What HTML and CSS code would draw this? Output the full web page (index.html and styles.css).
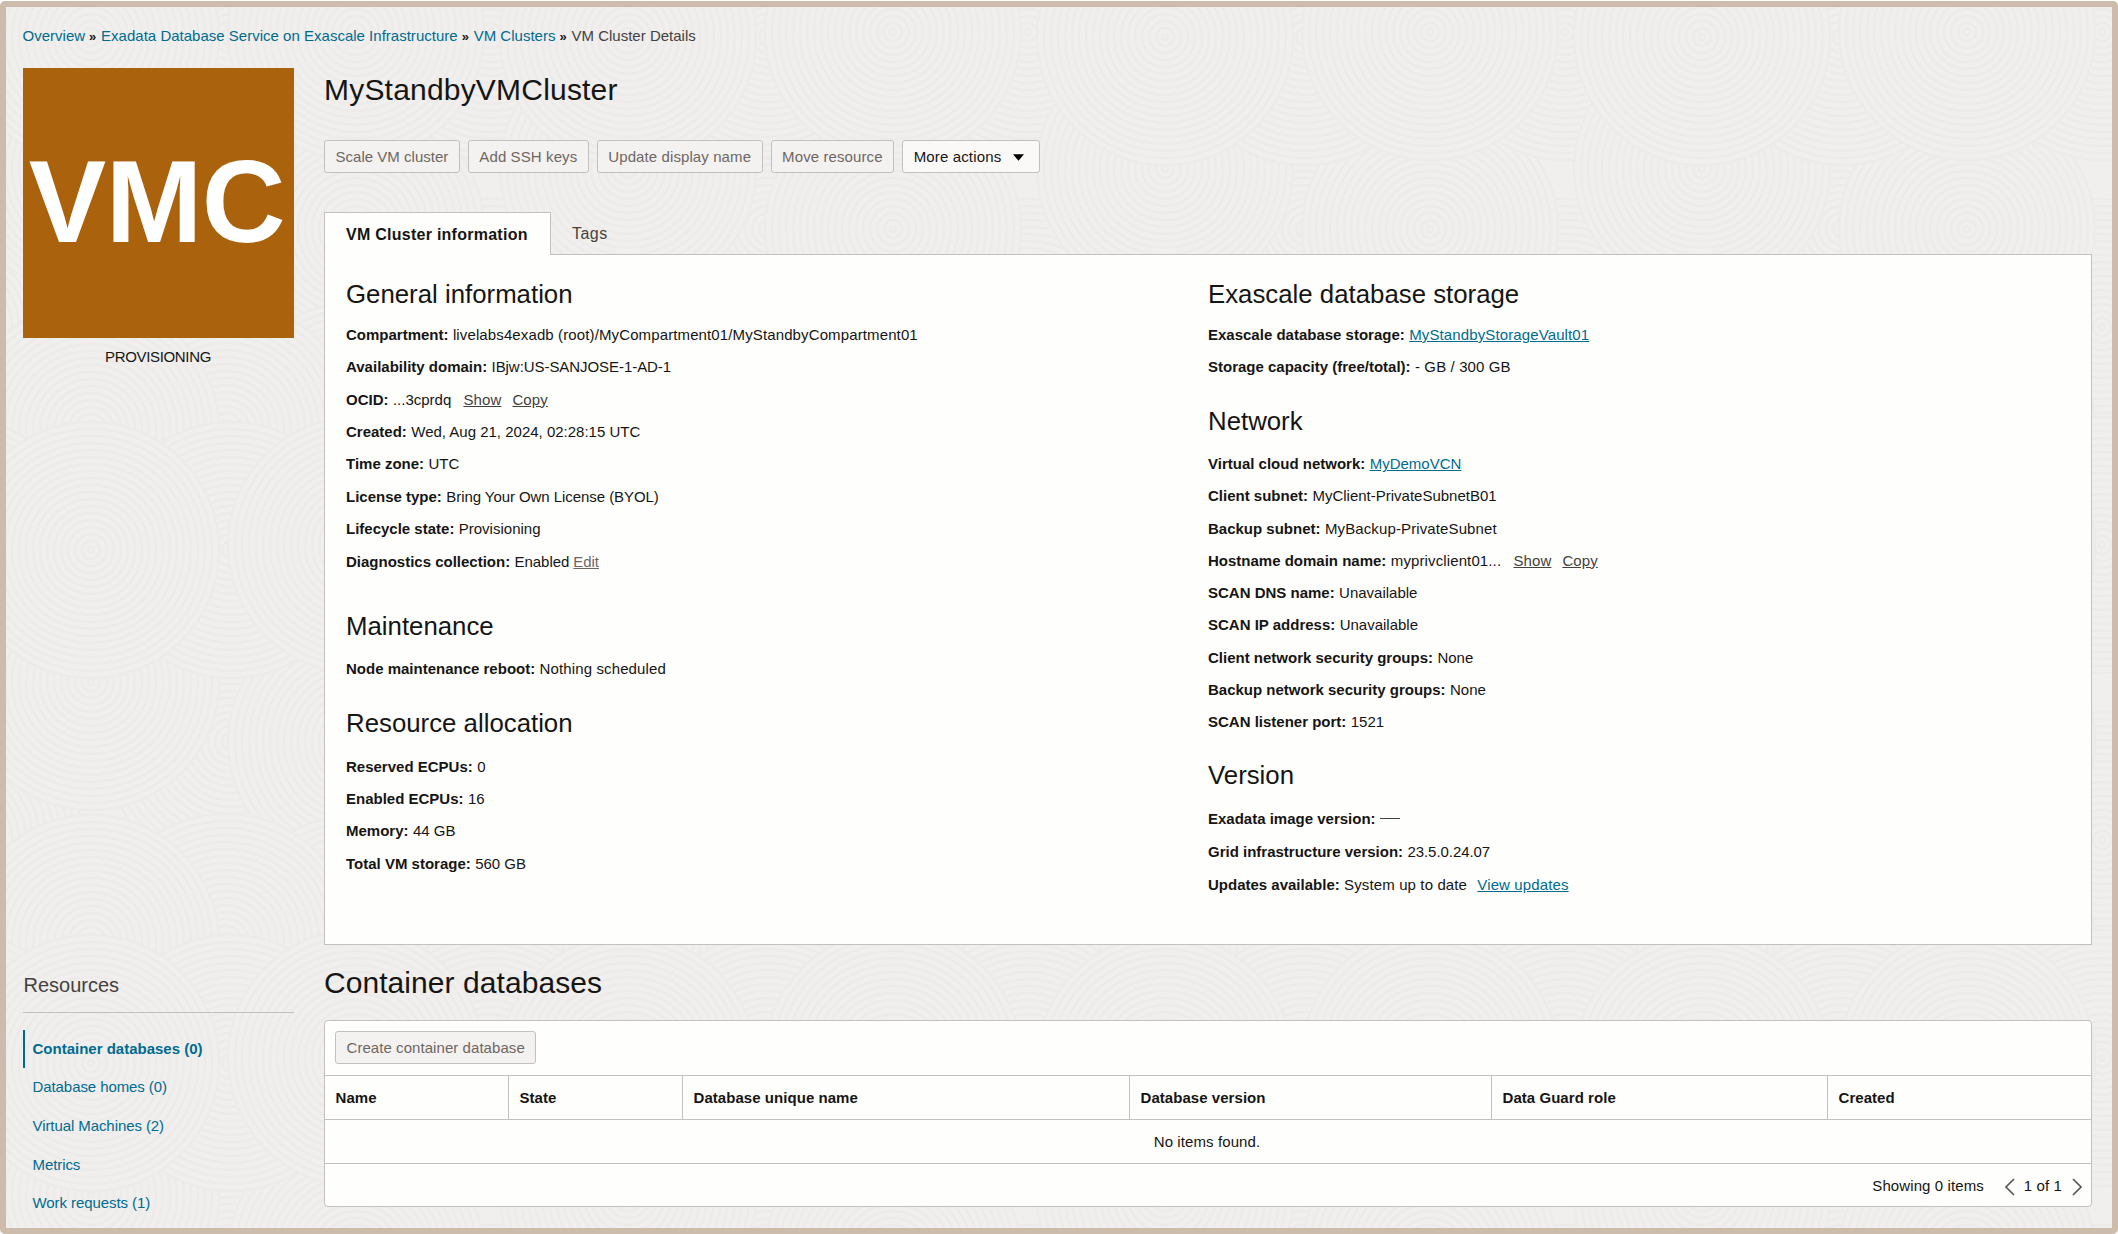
FILE: index.html
```html
<!DOCTYPE html>
<html lang="en">
<head>
<meta charset="utf-8">
<title>VM Cluster Details</title>
<link rel="stylesheet" href="styles.css">
</head>
<body>
<div class="app">
  <svg class="texture" aria-hidden="true">
    <defs>
      <g id="rings">
        <circle r="128"/><circle r="121"/><circle r="114"/><circle r="107"/><circle r="100"/><circle r="93"/><circle r="86"/><circle r="79"/><circle r="72"/><circle r="65"/><circle r="58"/><circle r="51"/><circle r="44"/><circle r="37"/><circle r="30"/><circle r="23"/><circle r="16"/><circle r="9"/><circle r="3"/>
      </g>
      <g id="tile">
        <use href="#rings" x="485" y="320"/>
        <use href="#rings" x="225" y="222"/>
        <use href="#rings" x="350" y="222"/>
        <use href="#rings" x="85" y="162"/>
        <use href="#rings" x="225" y="30"/>
        <use href="#rings" x="85" y="30"/>
        <use href="#rings" x="485" y="25"/>
        <use href="#rings" x="350" y="25"/>
        <use href="#rings" x="350" y="423"/>
        <use href="#rings" x="220" y="422"/>
        <use href="#rings" x="85" y="423"/>
      </g>
    </defs>
    <use href="#tile" x="-537" y="-513"/><use href="#tile" x="0" y="-513"/><use href="#tile" x="537" y="-513"/><use href="#tile" x="1074" y="-513"/><use href="#tile" x="1611" y="-513"/>
    <use href="#tile" x="-537" y="0"/><use href="#tile" x="0" y="0"/><use href="#tile" x="537" y="0"/><use href="#tile" x="1074" y="0"/><use href="#tile" x="1611" y="0"/>
    <use href="#tile" x="-537" y="513"/><use href="#tile" x="0" y="513"/><use href="#tile" x="537" y="513"/><use href="#tile" x="1074" y="513"/><use href="#tile" x="1611" y="513"/>
    <use href="#tile" x="-537" y="1026"/><use href="#tile" x="0" y="1026"/><use href="#tile" x="537" y="1026"/><use href="#tile" x="1074" y="1026"/><use href="#tile" x="1611" y="1026"/>
  </svg>

  <nav class="crumbs">
    <a href="#">Overview</a><span class="sep">»</span><a href="#">Exadata Database Service on Exascale Infrastructure</a><span class="sep">»</span><a href="#">VM Clusters</a><span class="sep">»</span><span>VM Cluster Details</span>
  </nav>

  <div class="columns top">
    <aside class="side">
      <div class="badge">VMC</div>
      <div class="status">PROVISIONING</div>
    </aside>
    <main class="main">
      <h1>MyStandbyVMCluster</h1>
      <div class="actions">
        <button class="btn off">Scale VM cluster</button>
        <button class="btn off">Add SSH keys</button>
        <button class="btn off">Update display name</button>
        <button class="btn off">Move resource</button>
        <button class="btn more">More actions <svg width="11" height="7" viewBox="0 0 10 6"><path d="M0 0h10L5 6z"/></svg></button>
      </div>
      <div class="tabs"><div class="tab active">VM Cluster information</div><div class="tab">Tags</div></div>
      <section class="card">
        <div class="col left">
          <h2>General information</h2>
          <dl>
            <div><dt>Compartment:</dt><dd class="wide">livelabs4exadb (root)/MyCompartment01/MyStandbyCompartment01</dd></div>
            <div><dt>Availability domain:</dt><dd class="tight">IBjw:US-SANJOSE-1-AD-1</dd></div>
            <div><dt>OCID:</dt><dd>...3cprdq <a class="util" href="#">Show</a><a class="util" href="#">Copy</a></dd></div>
            <div><dt>Created:</dt><dd>Wed, Aug 21, 2024, 02:28:15 UTC</dd></div>
            <div><dt>Time zone:</dt><dd>UTC</dd></div>
            <div><dt>License type:</dt><dd class="tight">Bring Your Own License (BYOL)</dd></div>
            <div><dt>Lifecycle state:</dt><dd>Provisioning</dd></div>
            <div><dt>Diagnostics collection:</dt><dd class="tight">Enabled <a class="edit" href="#">Edit</a></dd></div>
          </dl>
          <h2 class="maint">Maintenance</h2>
          <dl class="spaced"><div><dt>Node maintenance reboot:</dt><dd class="wide">Nothing scheduled</dd></div></dl>
          <h2 class="alloc">Resource allocation</h2>
          <dl class="spaced">
            <div><dt>Reserved ECPUs:</dt><dd>0</dd></div>
            <div><dt>Enabled ECPUs:</dt><dd>16</dd></div>
            <div><dt>Memory:</dt><dd>44 GB</dd></div>
            <div><dt>Total VM storage:</dt><dd>560 GB</dd></div>
          </dl>
        </div>
        <div class="col right">
          <h2>Exascale database storage</h2>
          <dl>
            <div><dt>Exascale database storage:</dt><dd><a class="link wide" href="#">MyStandbyStorageVault01</a></dd></div>
            <div><dt>Storage capacity (free/total):</dt><dd class="wide">- GB / 300 GB</dd></div>
          </dl>
          <h2 class="net">Network</h2>
          <dl class="spaced">
            <div><dt>Virtual cloud network:</dt><dd><a class="link" href="#">MyDemoVCN</a></dd></div>
            <div><dt>Client subnet:</dt><dd>MyClient-PrivateSubnetB01</dd></div>
            <div><dt>Backup subnet:</dt><dd class="wide">MyBackup-PrivateSubnet</dd></div>
            <div><dt>Hostname domain name:</dt><dd class="wide">myprivclient01... <a class="util" href="#">Show</a><a class="util" href="#">Copy</a></dd></div>
            <div><dt>SCAN DNS name:</dt><dd>Unavailable</dd></div>
            <div><dt>SCAN IP address:</dt><dd>Unavailable</dd></div>
            <div><dt>Client network security groups:</dt><dd>None</dd></div>
            <div><dt>Backup network security groups:</dt><dd>None</dd></div>
            <div><dt>SCAN listener port:</dt><dd>1521</dd></div>
          </dl>
          <h2 class="ver">Version</h2>
          <dl class="spaced version">
            <div><dt>Exadata image version:</dt><dd><span class="dash"></span></dd></div>
            <div><dt>Grid infrastructure version:</dt><dd class="tight">23.5.0.24.07</dd></div>
            <div><dt>Updates available:</dt><dd class="wide">System up to date <a class="link after" href="#">View updates</a></dd></div>
          </dl>
        </div>
      </section>
    </main>
  </div>

  <div class="columns bottom">
    <aside class="side">
      <h3>Resources</h3>
      <ul class="menu">
        <li class="current"><a href="#">Container databases (0)</a></li>
        <li><a href="#">Database homes (0)</a></li>
        <li><a href="#">Virtual Machines (2)</a></li>
        <li><a href="#">Metrics</a></li>
        <li><a href="#">Work requests (1)</a></li>
      </ul>
    </aside>
    <section class="main">
      <h1 class="list-title">Container databases</h1>
      <div class="panel">
        <div class="toolbar"><button class="btn off">Create container database</button></div>
        <div class="thead"><span>Name</span><span>State</span><span>Database unique name</span><span>Database version</span><span>Data Guard role</span><span>Created</span></div>
        <div class="empty">No items found.</div>
        <div class="pager">
          <span>Showing 0 items</span>
          <svg class="prev" width="11" height="18" viewBox="0 0 11 18"><path d="M10 1L2 9l8 8"/></svg>
          <span>1 of 1</span>
          <svg class="next" width="11" height="18" viewBox="0 0 11 18"><path d="M1 1l8 8-8 8"/></svg>
        </div>
      </div>
    </section>
  </div>
</div>
</body>
</html>
```
FILE: styles.css
```css
* { box-sizing: border-box; }
body {
  margin: 0;
  padding-top: 1px;
  background: #fff;
  color: #161513;
  font: 15px/20px "Liberation Sans", Arial, sans-serif;
}
h1, h2, h3, dl, dd, ul { margin: 0; padding: 0; font-weight: 400; }
a { color: #006b8f; text-decoration: none; }

.app {
  position: relative;
  height: 1233px;
  border: 6px solid #cdbbab;
  border-radius: 5px;
  padding: 0 20px 0 16.5px;
  background: #f0efed;
  overflow: hidden;
}
.texture { position: absolute; left: 0; top: 0; width: 100%; height: 100%; }
.texture circle { fill: #f0efed; stroke: #ecebe9; stroke-width: 2.4; }
.crumbs, .columns { position: relative; }

.crumbs { height: 61px; padding-top: 19px; white-space: nowrap; color: #45413e; letter-spacing: .01px; }
.sep { display: inline-block; width: 16px; padding-left: 4px; color: #161513; font-size: 13px; font-weight: 700; }

.columns { display: grid; grid-template-columns: 271px 1768px; gap: 30.5px; }
.top { height: 876px; }

.badge {
  height: 270px;
  background: #ab620d;
  color: #fff;
  font: 700 116px/269px "Liberation Sans", Arial, sans-serif;
  text-align: center;
  letter-spacing: -.5px;
  text-indent: -2px;
}
.status { margin-top: 9px; text-align: center; letter-spacing: -.33px; }

h1 { font-size: 30px; line-height: 36px; letter-spacing: .2px; }
.top h1 { padding-top: 4px; }
.actions { display: flex; gap: 8px; margin-top: 32px; }
.btn {
  height: 33px;
  padding: 0 10.5px;
  border: 1px solid #c4c0bb;
  border-radius: 3px;
  background: #fbf9f8;
  color: #161513;
  font: 15px "Liberation Sans", Arial, sans-serif;
  letter-spacing: .1px;
}
.actions .btn:first-child { letter-spacing: .02px; }
.more { letter-spacing: .15px; }
.more svg { margin: 0 5px 1px 7px; }
.btn.off { background: #f4f2f1; color: #6d6762; }

.tabs { display: flex; margin-top: 39px; height: 42px; position: relative; }
.tab { padding: 12px 21px 0; font-size: 16px; letter-spacing: .45px; color: #45413e; }
.tab.active {
  width: 227px;
  height: 43px;
  border: 1px solid #c4c0bb;
  border-bottom: 0;
  background: #fefefc;
  color: #161513;
  font-weight: 700;
  letter-spacing: .26px;
  white-space: nowrap;
}
.card {
  display: flex;
  height: 691px;
  border: 1px solid #c4c0bb;
  background: #fefefc;
  padding: 23px 21px 0;
}
.col.left { width: 862px; }
h2 { font-size: 25.8px; line-height: 32px; }
dl { margin-top: 8.9px; }
dl.spaced { margin-top: 11.2px; }
dl div { height: 32.4px; line-height: 32.4px; white-space: nowrap; }
.right .spaced div { height: 32.25px; }
dt, dd { display: inline; }
dt { font-weight: 700; margin-right: 4.4px; }
.wide { letter-spacing: .12px; }
.tight { letter-spacing: -.06px; }
.link { text-decoration: underline; }
.util { margin-left: 8px; color: #45413e; text-decoration: underline; letter-spacing: .1px; }
.util + .util { margin-left: 11px; }
.edit { color: #6d6762; text-decoration: underline; }
.after { margin-left: 6px; }
.dash { display: inline-block; width: 20px; height: 1px; vertical-align: 5px; background: #45413e; }
.maint { margin-top: 32.2px; }
.alloc { margin-top: 21.6px; }
.net { margin-top: 21.2px; }
.ver { margin-top: 21px; }
.right .version { margin-top: 11.8px; }
.right .version div { height: 32.9px; }

h3 { padding: 28.5px 0 0 1px; height: 69px; border-bottom: 1px solid #c4c0bb; font-size: 20px; line-height: 24px; color: #45413e; }
.menu { list-style: none; margin-top: 16.5px; }
.menu li { height: 38.7px; line-height: 38.9px; padding-left: 10px; letter-spacing: -.08px; }
.menu .current { border-left: 2px solid #006b8f; padding-left: 8px; font-weight: 700; letter-spacing: 0; }

.list-title { padding-top: 20.5px; height: 76px; letter-spacing: .06px; }
.panel { height: 187px; border: 1px solid #c4c0bb; border-radius: 4px; background: #fefefc; }
.toolbar { height: 54px; padding: 10px; }
.toolbar .btn { letter-spacing: .06px; }
.thead {
  display: grid;
  grid-template-columns: 184px 174px 447px 362px 336px 1fr;
  height: 45px;
  border: solid #c4c0bb;
  border-width: 1px 0;
  line-height: 43px;
  font-weight: 700;
  letter-spacing: .05px;
}
.thead span { padding-left: 10.5px; border-right: 1px solid #c4c0bb; }
.thead span:last-child { border: 0; }
.empty { height: 43px; line-height: 43px; text-align: center; letter-spacing: .1px; padding-right: 2px; }
.pager { display: flex; align-items: center; justify-content: flex-end; height: 44px; border-top: 1px solid #c4c0bb; padding-right: 8px; letter-spacing: .1px; }
.pager svg { fill: none; stroke: #5a5551; stroke-width: 1.7; margin-top: 2px; }
.prev { margin: 0 9px 0 20px; }
.next { margin-left: 10px; }
```
